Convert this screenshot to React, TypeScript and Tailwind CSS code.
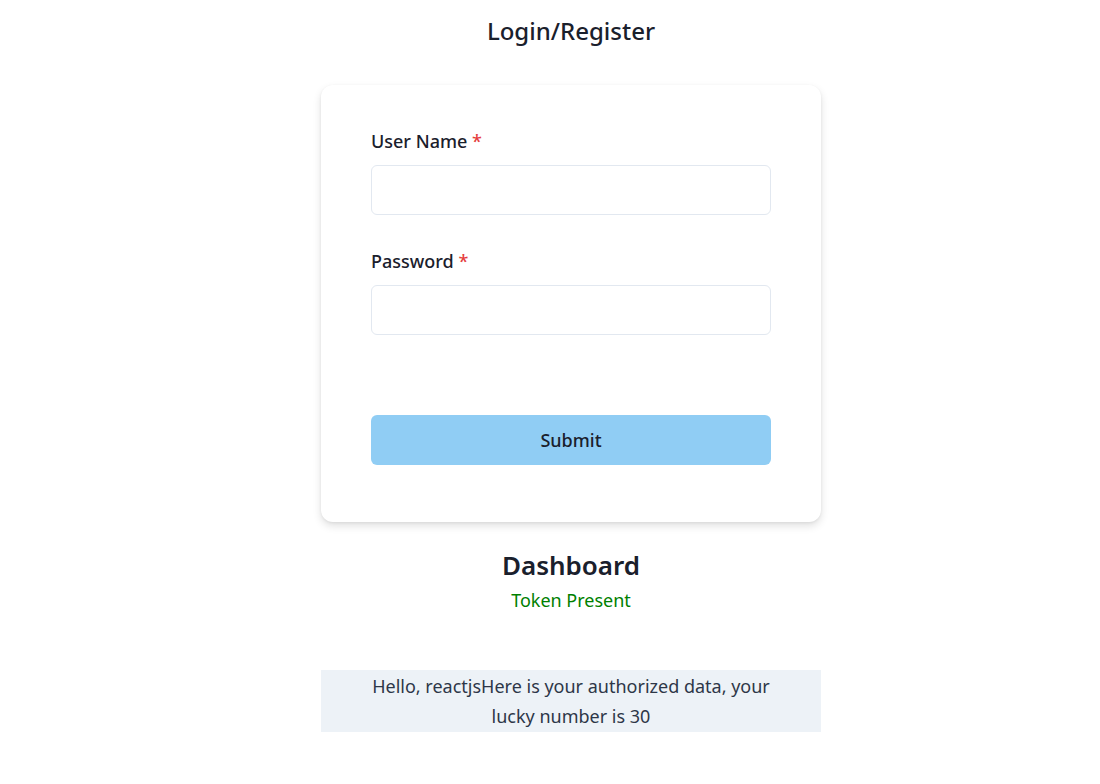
export default function App() {
  return (
    <div
      className="min-h-screen bg-white pl-[42px] text-[#1a202c]"
      style={{ fontFamily: '"Noto Sans", "Open Sans", sans-serif' }}
    >
      <div className="mx-auto flex w-[500px] flex-col items-center">
        {/* Title */}
        <h1 className="mt-[14px] h-[34px] text-[24px] font-medium leading-[34px]">Login/Register</h1>

        {/* Login card */}
        <div className="mt-[37px] w-[500px] rounded-xl bg-white px-[50px] pb-[57px] pt-[43px] shadow-[0_4px_8px_rgba(0,0,0,0.12),0_1px_3px_rgba(0,0,0,0.06)]">
          <label className="block text-[18px] font-medium leading-[27px]">
            User Name <span className="text-[#e53e3e]">*</span>
          </label>
          <input
            type="text"
            className="mt-[10px] block h-[50px] w-full rounded-md border border-[#e2e8f0] px-4 text-[18px] outline-none"
          />

          <label className="mt-[33px] block text-[18px] font-medium leading-[27px]">
            Password <span className="text-[#e53e3e]">*</span>
          </label>
          <input
            type="password"
            className="mt-[10px] block h-[50px] w-full rounded-md border border-[#e2e8f0] px-4 text-[18px] outline-none"
          />

          <button className="mt-[80px] block h-[50px] w-full rounded-md bg-[#90cdf4] text-[18px] font-medium text-[#1a202c]">
            Submit
          </button>
        </div>

        {/* Dashboard */}
        <h2 className="mt-[26px] text-[26px] font-semibold leading-[34px]">Dashboard</h2>
        <p className="mt-[5px] text-[18px] leading-[27px] text-[#008000]">Token Present</p>

        <div className="mt-[56px] w-[500px] bg-[#edf2f7] px-[40px] text-center text-[18px] leading-[30px] text-[#2d3748] pt-[1px] pb-[1px]">
          Hello, reactjsHere is your authorized data, your lucky number is 30
        </div>
      </div>
    </div>
  );
}
